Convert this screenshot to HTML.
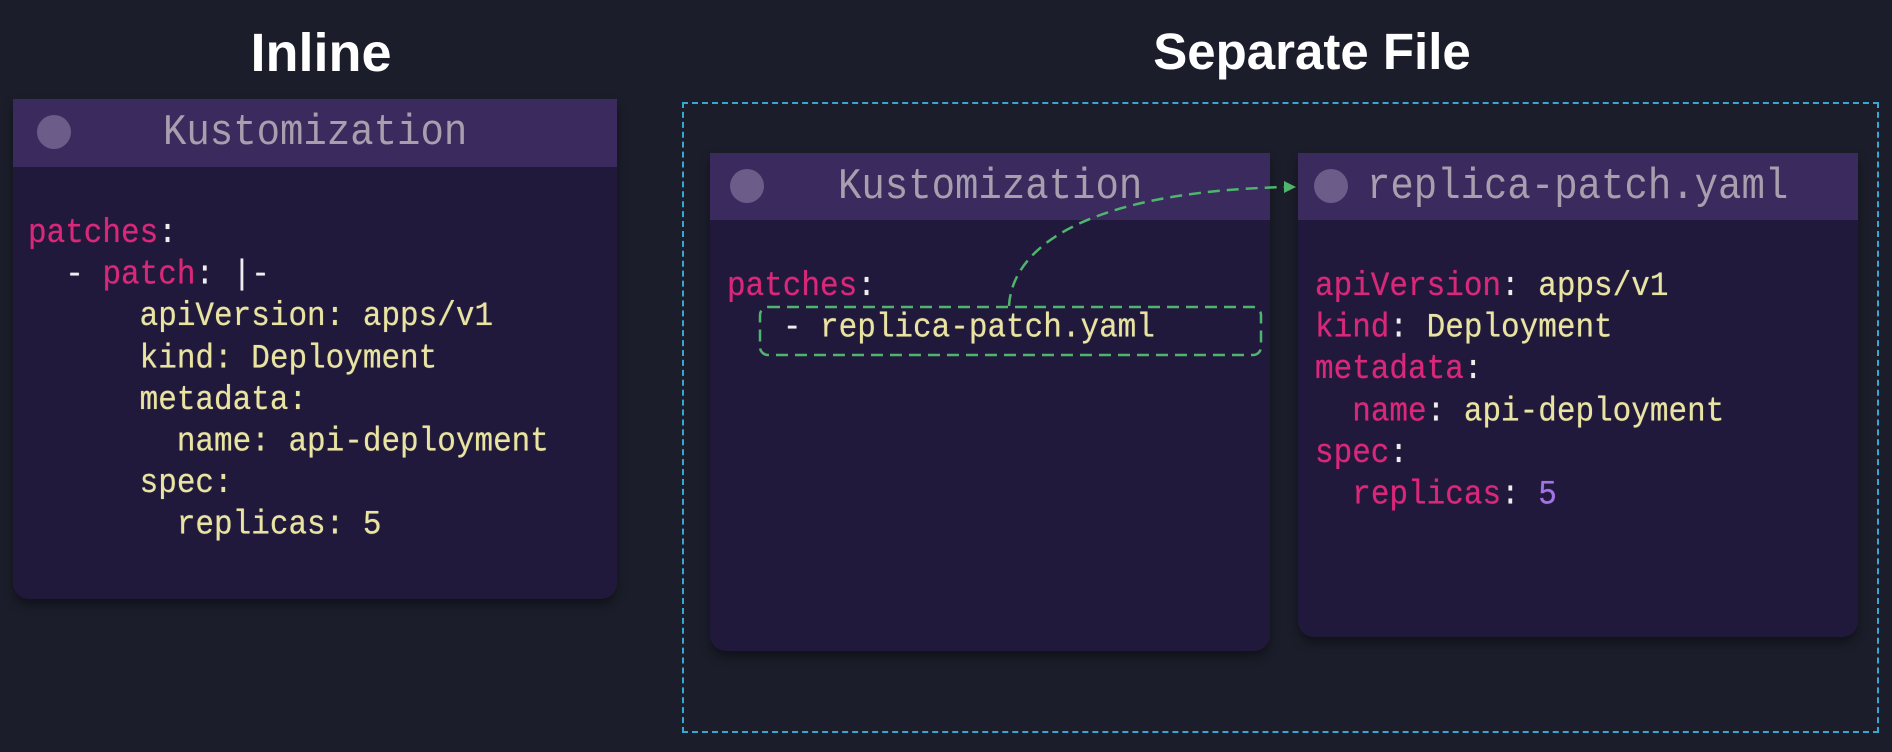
<!DOCTYPE html>
<html><head><meta charset="utf-8"><style>
body{margin:0;width:1892px;height:752px;background:#1b1e2a;position:relative;overflow:hidden;font-family:"Liberation Mono",monospace}
.t{position:absolute;font-family:"Liberation Sans",sans-serif;font-weight:bold;color:#fff;font-size:51px;transform:translateX(-50%);top:22px;white-space:nowrap}
.card{position:absolute;background:#21193b;border-radius:0 0 16px 16px;box-shadow:0 6px 10px rgba(0,0,0,.4)}
.hd{position:absolute;left:0;right:0;top:0;background:#3a2a5e;color:#a79fae;font-size:39px;line-height:67px}
.hd span{display:inline-block;transform:scaleY(1.12)}
.dot{position:absolute;width:34px;height:34px;border-radius:50%;background:#6b5c89;top:16px}
.code{position:absolute;font-size:31px;line-height:37.2px;color:#e9e4a2;white-space:pre;transform:scaleY(1.12);transform-origin:0 0;text-shadow:0 0 .6px currentColor}
.p{color:#d9287a}.w{color:#eee}.n{color:#a273e6}
</style></head><body>
<div class="t" style="left:321px;font-size:54px">Inline</div>
<div class="t" style="left:1312px">Separate File</div>

<div class="card" style="left:13px;top:99px;width:604px;height:500px">
 <div class="hd" style="height:68px"><div class="dot" style="left:24px"></div><span style="position:absolute;left:150px;top:1px">Kustomization</span></div>
 <div class="code" style="left:15px;top:114px"><span class="p">patches</span><span class="w">:</span>
  <span class="w">-</span> <span class="p">patch</span><span class="w">: |-</span>
      apiVersion: apps/v1
      kind: Deployment
      metadata:
        name: api-deployment
      spec:
        replicas: 5</div>
</div>

<div style="position:absolute;left:682px;top:102px;width:1193px;height:627px;border:2px dashed #39a6d2"></div>

<div class="card" style="left:710px;top:153px;width:560px;height:498px">
 <div class="hd" style="height:67px"><div class="dot" style="left:20px"></div><span style="position:absolute;left:128px;top:1px">Kustomization</span></div>
 <div class="code" style="left:17px;top:113px"><span class="p">patches</span><span class="w">:</span>
   <span class="w">-</span> replica-patch.yaml</div>
</div>

<div class="card" style="left:1298px;top:153px;width:560px;height:484px">
 <div class="hd" style="height:67px"><div class="dot" style="left:16px"></div><span style="position:absolute;left:69px;top:1px">replica-patch.yaml</span></div>
 <div class="code" style="left:17px;top:113px"><span class="p">apiVersion</span><span class="w">:</span> apps/v1
<span class="p">kind</span><span class="w">:</span> Deployment
<span class="p">metadata</span><span class="w">:</span>
  <span class="p">name</span><span class="w">:</span> api-deployment
<span class="p">spec</span><span class="w">:</span>
  <span class="p">replicas</span><span class="w">:</span> <span class="n">5</span></div>
</div>

<svg style="position:absolute;left:0;top:0" width="1892" height="752">
 <rect x="760" y="307" width="501" height="48" rx="8" fill="none" stroke="#4fb56e" stroke-width="2.5" stroke-dasharray="12 7"/>
 <path d="M1009 306 C1012 250 1080 192 1286 187" fill="none" stroke="#4fb56e" stroke-width="2.5" stroke-dasharray="12 7"/>
 <path d="M1284 181 L1296 187 L1284 193 Z" fill="#4fb56e"/>
</svg>
</body></html>
